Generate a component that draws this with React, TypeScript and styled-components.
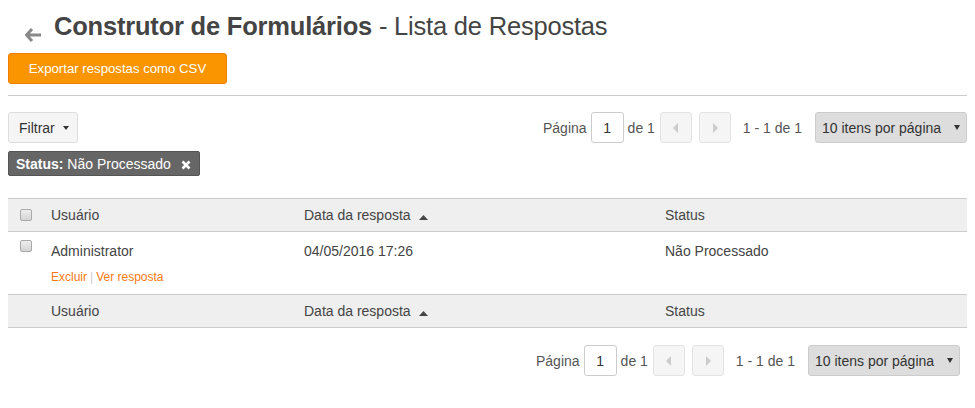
import styled, { createGlobalStyle } from 'styled-components';

const Global = createGlobalStyle`
    body {
        margin: 0;
        padding: 8px;
        font-family: 'Liberation Sans', Arial, sans-serif;
        color: #444;
        background: #fff;
    }
    * { box-sizing: border-box; }
`;

const Page = styled.div`
    width: 959px;
    font-size: 14px;
`;

const Title = styled.div`
    display: flex;
    align-items: flex-end;
    height: 45px;
`;

const Heading = styled.h1`
    margin: 0 0 12px 0;
    font-size: 25.5px;
    font-weight: normal;
    color: #444;
    line-height: 30px;
    letter-spacing: -0.2px;
    b {
        font-weight: bold;
    }
`;

const Back = styled.span`
    display: flex;
    padding: 0 12px 0 17px;
    margin-bottom: 11px;
`;

const ExportButton = styled.button`
    display: block;
    height: 31px;
    width: 219px;
    background: #fa9500;
    border: 1px solid #f07f00;
    border-radius: 3px;
    color: #fff;
    font-family: inherit;
    font-size: 13.2px;
    padding: 0;
`;

const Divider = styled.hr`
    border: 0;
    border-top: 1px solid #ccc;
    margin: 11px 0 16px 0;
`;

const Toolbar = styled.div`
    display: flex;
    justify-content: space-between;
    align-items: flex-start;
`;

const FilterColumn = styled.div`
    display: flex;
    flex-direction: column;
    align-items: flex-start;
    gap: 8px;
`;

const FilterButton = styled.button`
    display: flex;
    align-items: center;
    gap: 8px;
    height: 31px;
    width: 70px;
    padding: 0 10px;
    background: #f5f5f5;
    border: 1px solid #ddd;
    border-radius: 3px;
    font-family: inherit;
    font-size: 14px;
    color: #333;
`;

const Caret = styled.span<{ size: number }>`
    width: 0;
    height: 0;
    border-left: 3px solid transparent;
    border-right: 3px solid transparent;
    border-top: ${({ size }) => size}px solid #333;
`;

const Tag = styled.div`
    display: flex;
    align-items: center;
    height: 25px;
    width: 192px;
    padding: 0 0 0 7px;
    background: #666;
    border: 1px solid #555;
    border-radius: 2px;
    color: #fff;
    font-size: 14px;
    b {
        font-weight: bold;
    }
`;

const TagRemove = styled.span`
    display: flex;
    margin-left: 10px;
    margin-top: 3px;
`;

const PagerBar = styled.div<{ shift: number }>`
    display: flex;
    align-items: center;
    color: #555;
    font-size: 14px;
    margin-right: ${({ shift }) => shift}px;
    padding-left: 1px;
`;

const PageInput = styled.div`
    width: 33px;
    height: 31px;
    border: 1px solid #ccc;
    border-radius: 3px;
    margin: 0 4px;
    display: flex;
    align-items: center;
    justify-content: center;
    color: #333;
`;

const NavButton = styled.div`
    width: 32px;
    height: 31px;
    border: 1px solid #e3e3e3;
    border-radius: 3px;
    background: #f5f5f5;
    display: flex;
    align-items: center;
    justify-content: center;
    margin-left: 5px;
    & + & {
        margin-left: 7px;
    }
`;

const Range = styled.span`
    margin: 0 13px 0 12px;
`;

const PerPage = styled.div`
    width: 152px;
    height: 31px;
    background: #ddd;
    border: 1px solid #ccc;
    border-radius: 3px;
    display: flex;
    align-items: center;
    justify-content: space-between;
    padding: 0 6px;
    color: #333;
`;

const Table = styled.table`
    width: 100%;
    margin-top: 22px;
    border-collapse: collapse;
    table-layout: fixed;
    font-size: 14px;
    color: #444;
    th {
        font-weight: normal;
        text-align: left;
    }
    th,
    td {
        padding: 0 8px;
    }
    th:first-child,
    td:first-child {
        padding: 0 0 0 12px;
    }
`;

const Col = styled.col<{ w?: number }>`
    width: ${({ w }) => (w ? `${w}px` : 'auto')};
`;

const SortIcon = styled.svg`
    margin-left: 8px;
`;

const HeadRow = styled.tr`
    height: 33px;
    background: #efefef;
    border-top: 1px solid #ccc;
    border-bottom: 1px solid #ccc;
    th {
        vertical-align: middle;
    }
`;

const BodyRow = styled.tr`
    height: 63px;
    td {
        vertical-align: top;
        padding-top: 11px;
    }
    td:first-child {
        padding-top: 8px;
    }
`;

const Actions = styled.div`
    font-size: 12px;
    margin-top: 11px;
    a {
        color: #f77a12;
    }
`;

const Sep = styled.span`
    color: #ccc;
    margin: 0 3px;
`;

const Check = styled.span`
    display: block;
    width: 12px;
    height: 12px;
    border: 1px solid #a9a9a9;
    border-radius: 2px;
    background: linear-gradient(#eee, #d4d4d4);
`;

const Bottom = styled.div`
    display: flex;
    justify-content: flex-end;
    margin-top: 17px;
`;

const BackArrow = () => (
    <svg width="17" height="14" viewBox="0 0 17 14">
        <path d="M7 1 L1.5 7 L7 13 M2 7 H16" stroke="#888" strokeWidth="3" fill="none" strokeLinejoin="miter" />
    </svg>
);

function Pager({ shift = 0 }: { shift?: number }) {
    return (
        <PagerBar shift={shift}>
            <span>Página</span>
            <PageInput>1</PageInput>
            <span>de 1</span>
            <NavButton>
                <svg width="6" height="10" viewBox="0 0 6 10"><path d="M5 0 L0 5 L5 10 Z" fill="#ccc" /></svg>
            </NavButton>
            <NavButton>
                <svg width="6" height="10" viewBox="0 0 6 10"><path d="M1 0 L6 5 L1 10 Z" fill="#ccc" /></svg>
            </NavButton>
            <Range>1 - 1 de 1</Range>
            <PerPage>
                <span>10 itens por página</span>
                <Caret size={5} />
            </PerPage>
        </PagerBar>
    );
}

const SortUp = () => (
    <SortIcon width="9" height="5" viewBox="0 0 9 5">
        <path d="M0 5 L4.5 0 L9 5 Z" fill="#444" />
    </SortIcon>
);

function Headers({ withCheck }: { withCheck: boolean }) {
    return (
        <HeadRow>
            <th>{withCheck && <Check />}</th>
            <th>Usuário</th>
            <th>Data da resposta<SortUp /></th>
            <th>Status</th>
        </HeadRow>
    );
}

export default function App() {
    return (
        <Page>
            <Global />
            <Title>
                <Back><BackArrow /></Back>
                <Heading>
                    <b>Construtor de Formulários</b> - Lista de Respostas
                </Heading>
            </Title>
            <ExportButton>Exportar respostas como CSV</ExportButton>
            <Divider />
            <Toolbar>
                <FilterColumn>
                    <FilterButton>
                        Filtrar <Caret size={4} />
                    </FilterButton>
                    <Tag>
                        <span>
                            <b>Status:</b> Não Processado
                        </span>
                        <TagRemove>
                            <svg width="10" height="10" viewBox="0 0 10 10">
                                <path d="M1.5 1.5 L8.5 8.5 M8.5 1.5 L1.5 8.5" stroke="#fff" strokeWidth="2.6" />
                            </svg>
                        </TagRemove>
                    </Tag>
                </FilterColumn>
                <Pager />
            </Toolbar>
            <Table>
                <colgroup>
                    <Col w={35} />
                    <Col w={253} />
                    <Col w={361} />
                    <Col />
                </colgroup>
                <thead>
                    <Headers withCheck />
                </thead>
                <tbody>
                    <BodyRow>
                        <td><Check /></td>
                        <td>
                            Administrator
                            <Actions>
                                <a>Excluir</a>
                                <Sep>|</Sep>
                                <a>Ver resposta</a>
                            </Actions>
                        </td>
                        <td>04/05/2016 17:26</td>
                        <td>Não Processado</td>
                    </BodyRow>
                </tbody>
                <tfoot>
                    <Headers withCheck={false} />
                </tfoot>
            </Table>
            <Bottom>
                <Pager shift={7} />
            </Bottom>
        </Page>
    );
}
